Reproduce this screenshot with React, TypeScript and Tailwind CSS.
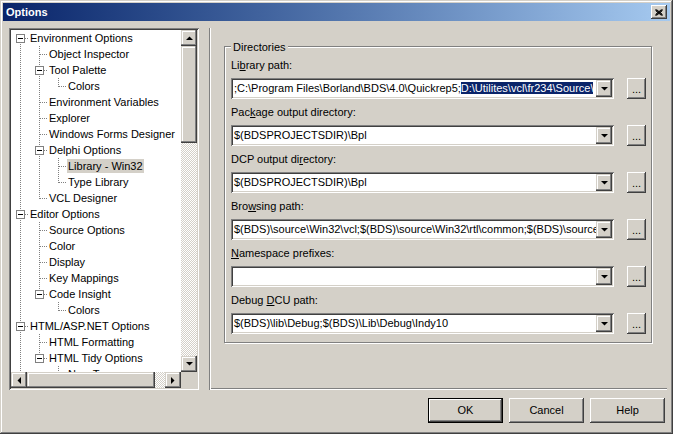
import React from 'react';

// classic win2k bevels
const raised =
  'bg-[#d4d0c8] shadow-[inset_-1px_-1px_0_#404040,inset_1px_1px_0_#ffffff,inset_-2px_-2px_0_#808080]';
const scrollBtn =
  'bg-[#d4d0c8] shadow-[inset_-1px_-1px_0_#404040,inset_-2px_-2px_0_#808080,inset_1px_1px_0_#d4d0c8,inset_2px_2px_0_#ffffff]';
const sunken =
  'shadow-[inset_1px_1px_0_#808080,inset_-1px_-1px_0_#ffffff,inset_2px_2px_0_#404040,inset_-2px_-2px_0_#d4d0c8]';
const track = 'bg-[repeating-conic-gradient(#d4d0c8_0_25%,#ffffff_0_50%)] bg-[length:2px_2px]';

type TreeNode = { label: string; level: number; last?: boolean; box?: boolean; selected?: boolean };

const TREE: TreeNode[] = [
  { label: 'Environment Options', level: 0, box: true },
  { label: 'Object Inspector', level: 1 },
  { label: 'Tool Palette', level: 1, box: true },
  { label: 'Colors', level: 2, last: true },
  { label: 'Environment Variables', level: 1 },
  { label: 'Explorer', level: 1 },
  { label: 'Windows Forms Designer', level: 1 },
  { label: 'Delphi Options', level: 1, box: true },
  { label: 'Library - Win32', level: 2, selected: true },
  { label: 'Type Library', level: 2, last: true },
  { label: 'VCL Designer', level: 1, last: true },
  { label: 'Editor Options', level: 0, box: true },
  { label: 'Source Options', level: 1 },
  { label: 'Color', level: 1 },
  { label: 'Display', level: 1 },
  { label: 'Key Mappings', level: 1 },
  { label: 'Code Insight', level: 1, box: true, last: true },
  { label: 'Colors', level: 2, last: true },
  { label: 'HTML/ASP.NET Options', level: 0, box: true },
  { label: 'HTML Formatting', level: 1 },
  { label: 'HTML Tidy Options', level: 1, box: true, last: true },
  { label: 'New Tags', level: 2 },
];

// which indent columns still carry a vertical line
function buildRows(nodes: TreeNode[]) {
  const open: boolean[] = [];
  return nodes.map((n, i) => {
    const guides = open.slice(0, n.level);
    open[n.level] = !n.last;
    open.length = n.level + 1;
    return { ...n, guides, first: i === 0 };
  });
}

function Guide({ on }: { on: boolean }) {
  return (
    <svg width="19" height="16" className="shrink-0">
      {on && <line x1="9.5" y1="0" x2="9.5" y2="16" stroke="#808080" strokeDasharray="1 1" />}
    </svg>
  );
}

function Elbow({ first, last, box }: { first: boolean; last?: boolean; box?: boolean }) {
  return (
    <svg width="19" height="16" className="shrink-0">
      <line x1="9.5" y1={first ? 8 : 0} x2="9.5" y2={last ? 9 : 16} stroke="#808080" strokeDasharray="1 1" />
      <line x1="10" y1="8.5" x2="18" y2="8.5" stroke="#808080" strokeDasharray="1 1" />
      {box && (
        <>
          <rect x="5.5" y="4.5" width="8" height="8" fill="#ffffff" stroke="#808080" />
          <line x1="7" y1="8.5" x2="12" y2="8.5" stroke="#000000" />
        </>
      )}
    </svg>
  );
}

function Arrow({ dir }: { dir: 'up' | 'down' | 'left' | 'right' }) {
  const pts = {
    up: '0,4 7,4 3.5,0.5',
    down: '0,0 7,0 3.5,3.5',
    left: '4,0 4,7 0.5,3.5',
    right: '0,0 0,7 3.5,3.5',
  }[dir];
  const vertical = dir === 'up' || dir === 'down';
  return (
    <svg width={vertical ? 7 : 4} height={vertical ? 4 : 7}>
      <polygon points={pts} fill="#000000" />
    </svg>
  );
}

function TreeView() {
  const rows = buildRows(TREE);
  return (
    <div className={`ml-[6px] w-[190px] h-full bg-white p-[2px] flex flex-col ${sunken}`}>
      <div className="flex flex-1 min-h-0">
        <div className="w-[170px] overflow-hidden">
          {rows.map((r, i) => (
            <div key={i} className="flex h-[16px] items-center whitespace-nowrap">
              {r.guides.map((g, j) => (
                <Guide key={j} on={g} />
              ))}
              <Elbow first={r.first} last={r.last} box={r.box} />
              <span
                className={`ml-[-1px] px-[1px] leading-[14px] ${r.selected ? 'bg-[#d4d0c8]' : ''}`}
              >
                {r.label}
              </span>
            </div>
          ))}
        </div>
        <div className="w-[16px] flex flex-col">
          <div className={`h-[16px] flex items-center justify-center ${scrollBtn}`}>
            <Arrow dir="up" />
          </div>
          <div className={`h-[97px] ${scrollBtn}`} />
          <div className={`flex-1 ${track}`} />
          <div className={`h-[16px] flex items-center justify-center ${scrollBtn}`}>
            <Arrow dir="down" />
          </div>
        </div>
      </div>
      <div className="flex h-[16px]">
        <div className={`w-[16px] flex items-center justify-center ${scrollBtn}`}>
          <Arrow dir="left" />
        </div>
        <div className={`w-[128px] ${scrollBtn}`} />
        <div className={`w-[10px] ${track}`} />
        <div className={`w-[16px] flex items-center justify-center ${scrollBtn}`}>
          <Arrow dir="right" />
        </div>
        <div className="w-[16px] bg-[#d4d0c8]" />
      </div>
    </div>
  );
}

type DirRow = { label: React.ReactNode; value: React.ReactNode };

const DIRS: DirRow[] = [
  {
    label: (
      <>
        Li<u>b</u>rary path:
      </>
    ),
    value: (
      <>
        ;C:\Program Files\Borland\BDS\4.0\Quickrep5;
        <span className="bg-[#0a246a] text-white">D:\Utilites\vcl\fr234\Source\</span>
      </>
    ),
  },
  {
    label: (
      <>
        Pac<u>k</u>age output directory:
      </>
    ),
    value: '$(BDSPROJECTSDIR)\\Bpl',
  },
  {
    label: (
      <>
        DCP output di<u>r</u>ectory:
      </>
    ),
    value: '$(BDSPROJECTSDIR)\\Bpl',
  },
  {
    label: (
      <>
        Bro<u>w</u>sing path:
      </>
    ),
    value: '$(BDS)\\source\\Win32\\vcl;$(BDS)\\source\\Win32\\rtl\\common;$(BDS)\\source\\Win32\\rtl\\sys',
  },
  {
    label: (
      <>
        <u>N</u>amespace prefixes:
      </>
    ),
    value: '',
  },
  {
    label: (
      <>
        Debug <u>D</u>CU path:
      </>
    ),
    value: '$(BDS)\\lib\\Debug;$(BDS)\\Lib\\Debug\\Indy10',
  },
];

function ComboRow({ row }: { row: DirRow }) {
  return (
    <div className="flex flex-col">
      <div className="h-[14px] leading-[14px]">{row.label}</div>
      <div className="flex mt-[6px]">
        <div className={`w-[383px] h-[21px] bg-white p-[2px] flex ${sunken}`}>
          <div className="flex-1 overflow-hidden whitespace-nowrap pl-[1px] leading-[17px]">{row.value}</div>
          <div className={`w-[16px] h-[17px] flex items-center justify-center ${scrollBtn}`}>
            <Arrow dir="down" />
          </div>
        </div>
        <button type="button" className={`ml-[13px] w-[19px] h-[21px] flex items-center justify-center pt-[2px] leading-none ${raised}`}>
          ...
        </button>
      </div>
    </div>
  );
}

function DialogButton({ children, isDefault }: { children: React.ReactNode; isDefault?: boolean }) {
  if (isDefault) {
    return (
      <div className="w-[75px] h-[25px] border border-black">
        <button type="button" className={`w-full h-full flex items-center justify-center ${raised}`}>
          {children}
        </button>
      </div>
    );
  }
  return (
    <button type="button" className={`w-[75px] h-[25px] flex items-center justify-center ${raised}`}>
      {children}
    </button>
  );
}

export default function App() {
  return (
    <div className="w-[673px] h-[434px] bg-[#d4d0c8] p-[3px] flex flex-col font-['Liberation_Sans',Arial,sans-serif] text-[11px] text-black shadow-[inset_-1px_-1px_0_#404040,inset_1px_1px_0_#d4d0c8,inset_-2px_-2px_0_#808080,inset_2px_2px_0_#ffffff]">
      {/* Title bar */}
      <div className="h-[18px] flex items-center bg-linear-to-r from-[#0a246a] to-[#a6caf0] pl-[3px] pr-[3px]">
        <span className="flex-1 font-bold text-white leading-[18px]">Options</span>
        <div className={`w-[16px] h-[14px] flex items-center justify-center ${raised}`}>
          <svg width="8" height="7">
            <path d="M0.5 0.5 L7.5 6.5 M1.5 0.5 L7.5 5.5 M0.5 1.5 L6.5 6.5 M7.5 0.5 L0.5 6.5 M6.5 0.5 L0.5 5.5 M7.5 1.5 L1.5 6.5" stroke="#000000" strokeWidth="1" />
          </svg>
        </div>
      </div>

      {/* Client */}
      <div className="flex-1 flex flex-col">
        <div className="flex mt-[7px] h-[362px]">
          <TreeView />
          <div className="ml-[10px] mr-[3px] flex-1 h-full px-[15px] pt-[18px] shadow-[inset_1px_0_0_#808080,inset_2px_0_0_#ffffff,inset_0_-1px_0_#ffffff,inset_0_-2px_0_#808080]">
            <div className="relative border border-[#808080] pt-[11px] pb-[8px] pl-[6px] pr-[5px] shadow-[inset_1px_1px_0_#ffffff,1px_1px_0_#ffffff]">
              <span className="absolute left-[6px] top-[-6px] px-[2px] bg-[#d4d0c8] leading-[13px]">Directories</span>
              <div className="flex flex-col gap-[6px]">
                {DIRS.map((d, i) => (
                  <ComboRow key={i} row={d} />
                ))}
              </div>
            </div>
          </div>
        </div>
        <div className="flex justify-end gap-[6px] mt-[8px] pr-[5px]">
          <DialogButton isDefault>OK</DialogButton>
          <DialogButton>Cancel</DialogButton>
          <DialogButton>Help</DialogButton>
        </div>
      </div>
    </div>
  );
}
